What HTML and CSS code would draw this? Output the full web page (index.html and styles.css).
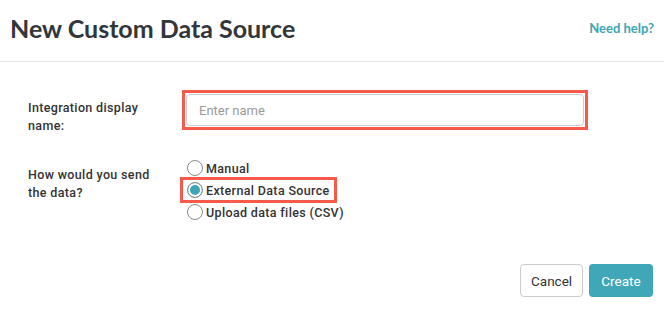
FILE: index.html
```html
<!DOCTYPE html>
<html lang="en">
<head>
    <meta charset="UTF-8">
    <meta name="viewport" content="width=device-width, initial-scale=1.0">
    <title>New Custom Data Source</title>
    <link rel="stylesheet" href="styles.css">
</head>
<body>
    <div class="header">
        <h1>New Custom Data Source</h1>
        <a href="#" class="help-link">Need help?</a>
    </div>
    <form class="source-form">
        <div class="form-row">
            <label for="displayName" class="row-label">Integration display name:</label>
            <div class="highlight input-wrap">
                <input type="text" id="displayName" name="displayName" placeholder="Enter name">
            </div>
        </div>

        <div class="form-row radio-row">
            <span class="row-label">How would you send the data?</span>
            <div class="radio-options">
                <label class="radio-option">
                    <input type="radio" name="method" value="manual">
                    <span class="radio-dot"></span>
                    Manual
                </label>
                <label class="radio-option highlight">
                    <input type="radio" name="method" value="external" checked>
                    <span class="radio-dot"></span>
                    External Data Source
                </label>
                <label class="radio-option">
                    <input type="radio" name="method" value="csv">
                    <span class="radio-dot"></span>
                    Upload data files (CSV)
                </label>
            </div>
        </div>

        <div class="form-buttons">
            <button type="button" class="cancel-btn">Cancel</button>
            <button type="submit" class="create-btn">Create</button>
        </div>
    </form>
</body>
</html>
```

FILE: styles.css
```css
body {
    margin: 0;
    padding: 0;
    font-family: 'Roboto', 'Liberation Sans', sans-serif;
    background: #fff;
    color: #333;
}

/* Header Section */
.header {
    display: flex;
    justify-content: space-between;
    align-items: center;
    height: 61px;
    padding: 0 10px;
    border-bottom: 1px solid #e6e6e6;
}

.header h1 {
    margin: 0 0 6px;
    font-family: 'Lato', sans-serif;
    font-size: 25px;
    font-weight: 700;
    color: #31363b;
}

.help-link {
    margin-bottom: 6px;
    font-family: 'Lato', sans-serif;
    font-size: 13px;
    font-weight: 700;
    color: #3aa6b6;
    text-decoration: none;
}

/* Form */
.source-form {
    padding: 28px 11px 0 28px;
}

.form-row {
    display: flex;
    align-items: flex-start;
}

.row-label {
    width: 130px;
    margin-right: 24px;
    padding-top: 9px;
    font-size: 12.5px;
    font-weight: 500;
    line-height: 18px;
    letter-spacing: 0.35px;
    color: #333;
}

.highlight {
    outline: 3px solid #f65a4b;
}

.input-wrap {
    width: 398px;
    margin: 3px 0 0 3px;
    padding: 1px;
    outline-offset: 0;
}

.input-wrap input {
    display: block;
    width: 100%;
    height: 32px;
    box-sizing: border-box;
    padding: 0 12px;
    font-family: 'Roboto', sans-serif;
    font-size: 13px;
    color: #333;
    border: 1px solid #ccc;
    border-radius: 4px;
    outline: none;
}

.input-wrap input::placeholder {
    color: #9a9a9a;
}

.radio-row {
    margin-top: 22px;
}

.radio-row .row-label {
    padding-top: 9px;
}

.radio-options {
    display: flex;
    flex-direction: column;
}

.radio-option {
    display: flex;
    align-items: center;
    width: fit-content;
    height: 22px;
    padding: 0 5px 0 5px;
    font-size: 12.5px;
    font-weight: 500;
    letter-spacing: 0.35px;
    color: #333;
    cursor: pointer;
}

.radio-option.highlight {
    outline-offset: -1px;
}

.radio-option input {
    display: none;
}

.radio-dot {
    width: 14px;
    height: 14px;
    margin-right: 3px;
    border: 1px solid #8c8c8c;
    border-radius: 50%;
    background: #fff;
    box-sizing: content-box;
}

.radio-option input:checked + .radio-dot {
    background: #3aa6b6;
    box-shadow: inset 0 0 0 2px #fff;
}

.form-buttons {
    display: flex;
    justify-content: flex-end;
    gap: 6px;
    margin-top: 41px;
}

.form-buttons button {
    height: 33px;
    padding: 0 10px;
    font-family: 'Roboto', sans-serif;
    font-size: 13.5px;
    border-radius: 4px;
    cursor: pointer;
}

.cancel-btn {
    width: 63px;
    background-color: #fff;
    color: #333;
    border: 1px solid #ccc;
}

.create-btn {
    width: 64px;
    background-color: #3fa7b8;
    color: #fff;
    border: none;
}

.create-btn:hover {
    background-color: #37939f;
}
```
